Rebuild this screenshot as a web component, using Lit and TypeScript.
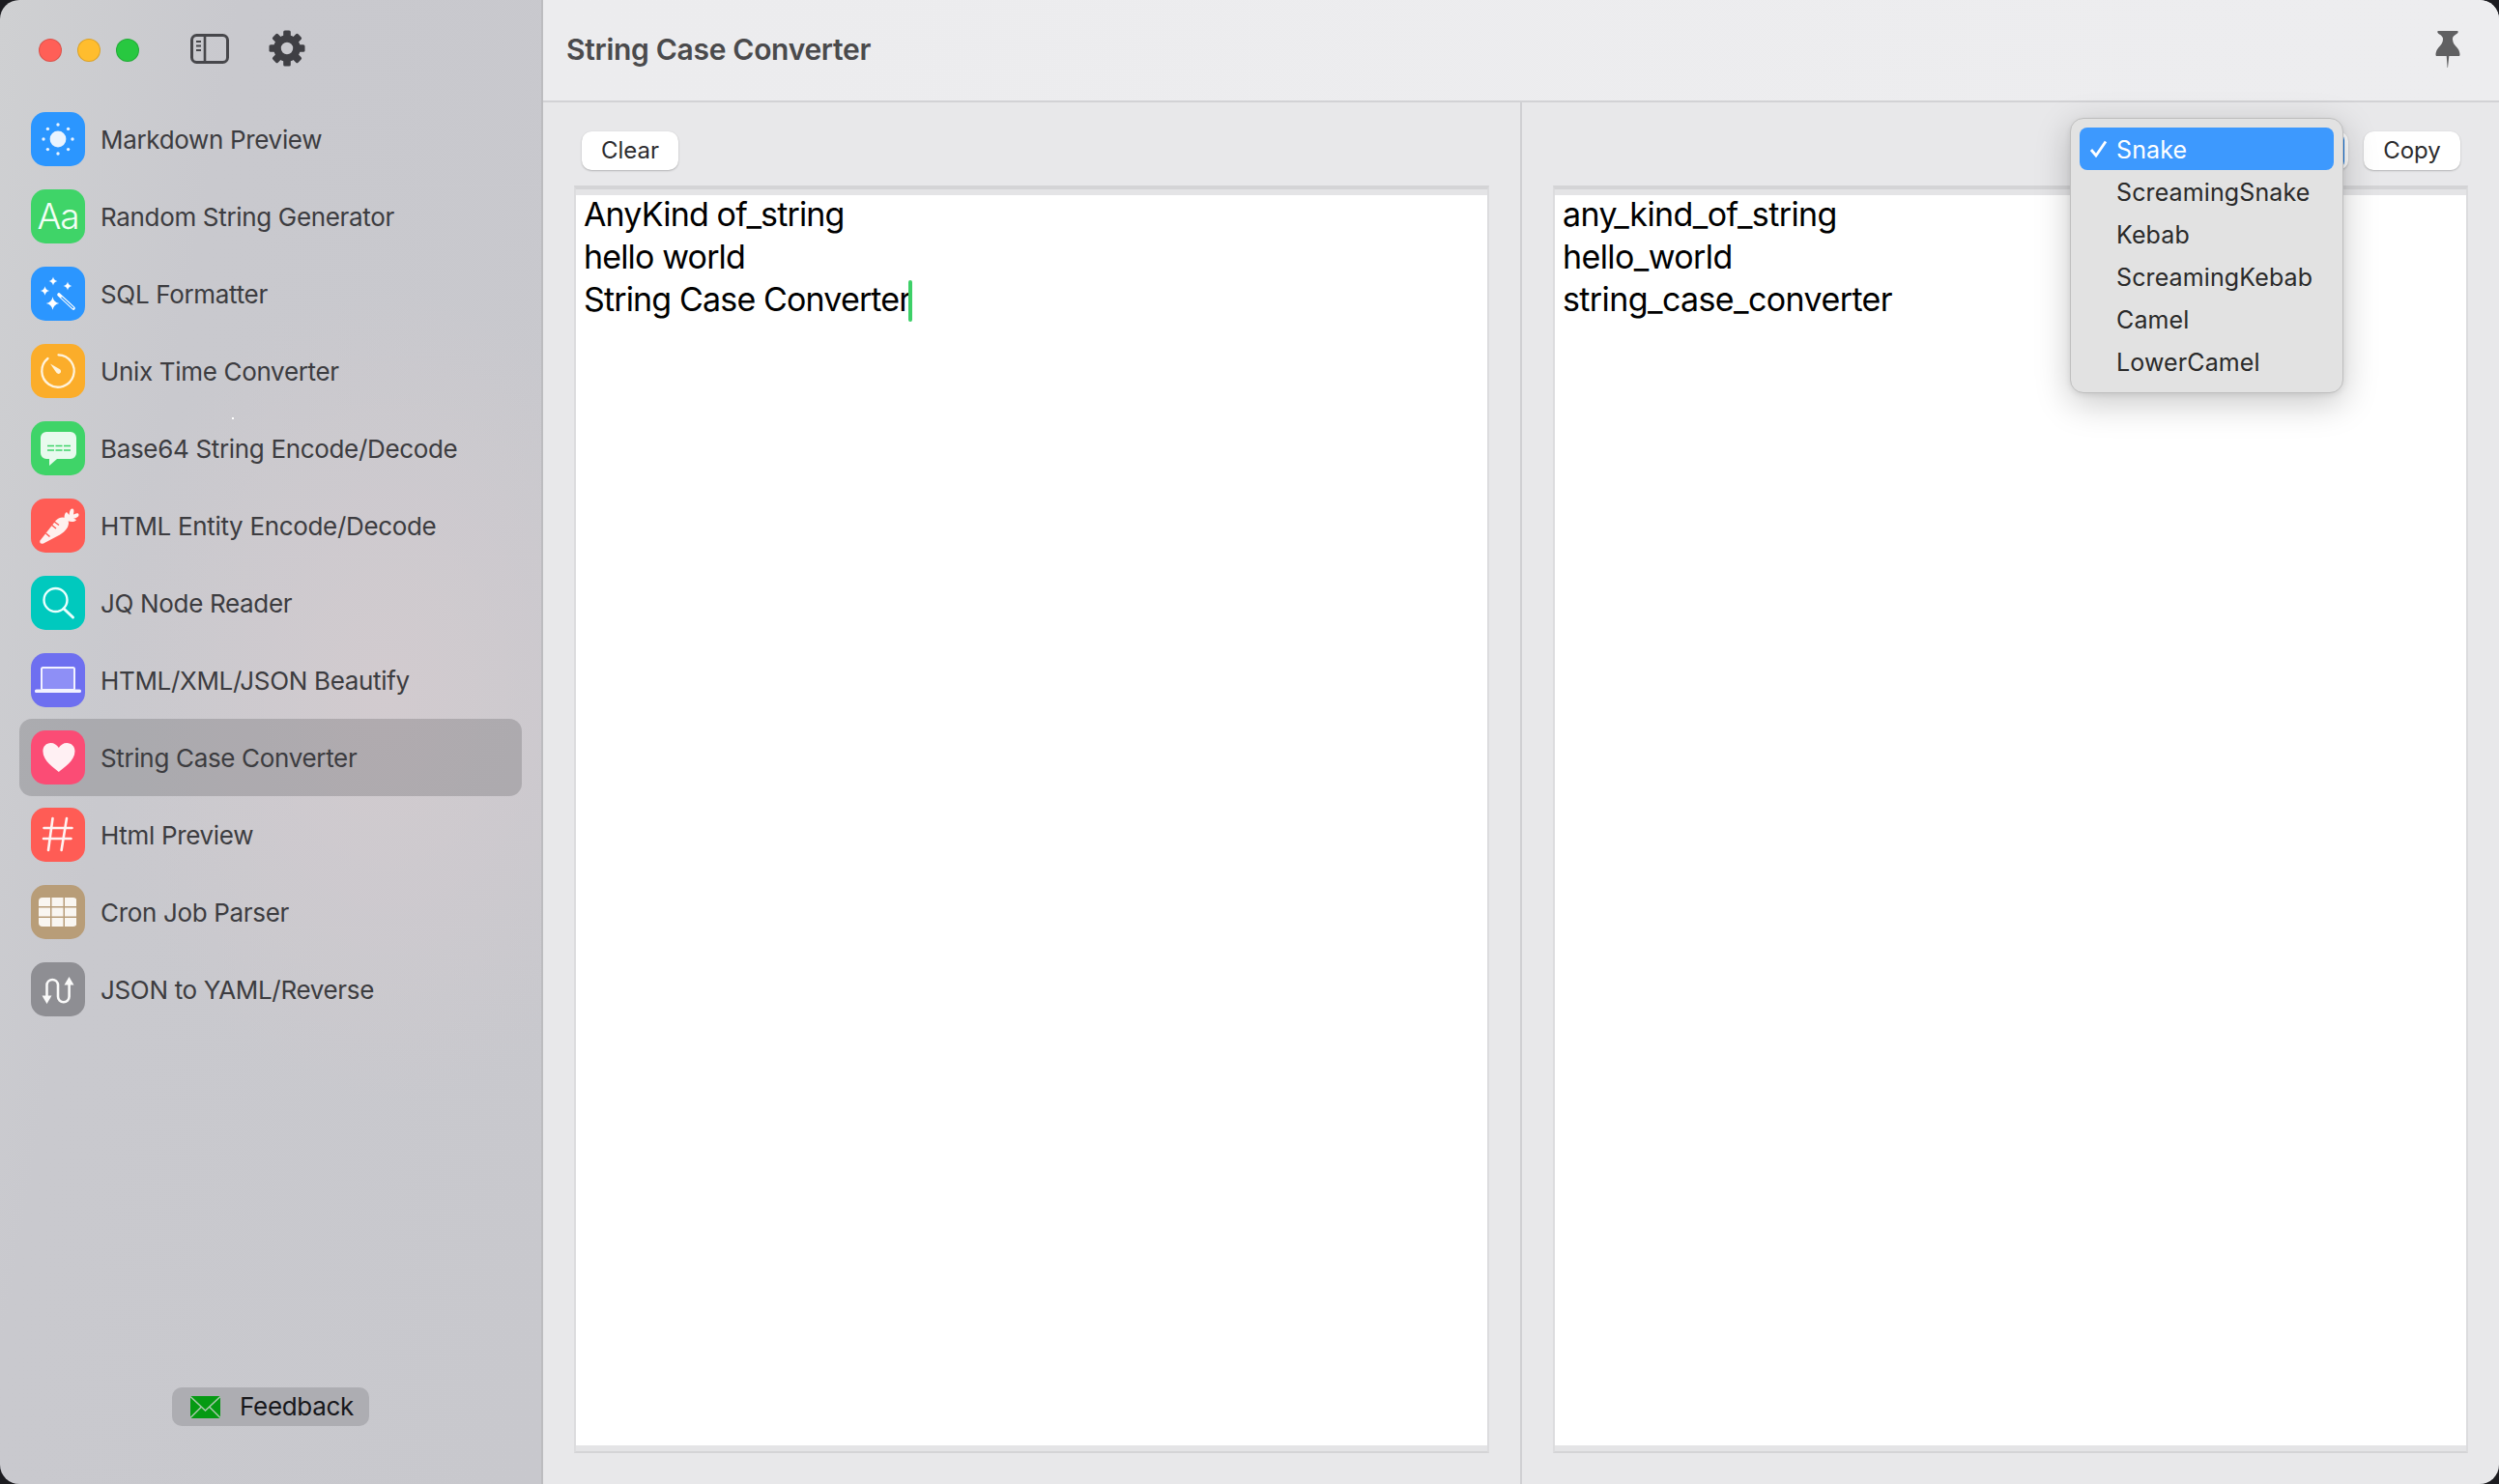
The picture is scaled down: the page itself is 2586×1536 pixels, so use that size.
import { LitElement, html, css, svg } from "lit";
import { customElement } from "lit/decorators.js";

const star = (x: number, y: number, r: number) =>
  svg`<path d="M${x} ${y - r}Q${x + r * 0.15} ${y - r * 0.15} ${x + r} ${y}Q${x + r * 0.15} ${y + r * 0.15} ${x} ${y + r}Q${x - r * 0.15} ${y + r * 0.15} ${x - r} ${y}Q${x - r * 0.15} ${y - r * 0.15} ${x} ${y - r}Z" fill="#fff"/>`;

const sunDots = [0, 45, 90, 135, 180, 225, 270, 315].map((a) => {
  const r = (a * Math.PI) / 180;
  return svg`<circle cx=${28 + 15 * Math.cos(r)} cy=${28 + 15 * Math.sin(r)} r="1.7" fill="#eaf4ff"/>`;
});

const gridCells: unknown[] = [];
for (let r = 0; r < 3; r++) {
  for (let c = 0; c < 3; c++) {
    gridCells.push(svg`<rect x=${8 + c * 13.5} y=${13 + r * 10.5} width="12" height="9" fill="#f9f6f1"/>`);
  }
}

const icons = {
  sun: svg`<circle cx="28" cy="28" r="8.4" fill="#eaf4ff"/>${sunDots}`,
  wand: svg`${star(23, 15, 4.5)}${star(38, 20, 4.5)}${star(14.5, 25, 4.8)}${star(22.5, 38, 6.8)}
    <path d="M29 29L44 43" stroke="#fff" stroke-width="3.6" stroke-linecap="round"/>
    <path d="M32 32L43.5 42.5" stroke="#2b96ff" stroke-width="1.4" stroke-linecap="round"/>`,
  timer: svg`<path d="M28.5 11.3A16.7 16.7 0 1 1 17.5 15" fill="none" stroke="#fff3dc" stroke-width="2.3" stroke-linecap="round"/>
    <path d="M20 20.5L30 26.2A2.6 2.6 0 1 1 26.2 29.6Z" fill="#fff3dc"/>`,
  message: svg`<path d="M16 11H41A6 6 0 0 1 47 17V33A6 6 0 0 1 41 39H27L19 46V39H16A6 6 0 0 1 10 33V17A6 6 0 0 1 16 11Z" fill="#e8faee"/>
    <path d="M17 25.5H41M17 30H41" stroke="#3dd468" stroke-width="1.3" stroke-dasharray="7 1.5"/>`,
  carrot: svg`<path d="M9.5 43.5C8.5 46 10.5 47.5 13 46.5L30 37.5C36 34 40 28.5 38.8 23.5C36.5 18.5 30 18.5 26 22.5Z" fill="#fff0ee"/>
    <path d="M35 22C34 18 35 15 37 14L39.5 17C40 13 41 10 43 10.5C45 11 44.5 14 44 16.5C46 15.5 49 14 49.5 16.5C50 18.5 47 20.5 44 20.5L47 22C46 24.5 41 24.5 38 23Z" fill="#fff0ee"/>
    <path d="M21 27L26 31M23.5 23.5L29 27.5M15.5 36L19.5 39.5" stroke="#ff5c55" stroke-width="1.5"/>`,
  search: svg`<circle cx="25.5" cy="25" r="12" fill="none" stroke="#eafffd" stroke-width="2.4"/>
    <path d="M34 34L43.5 43" stroke="#eafffd" stroke-width="3" stroke-linecap="round"/>`,
  laptop: svg`<rect x="11" y="15" width="34" height="23" rx="1.5" fill="#8e8ff6" stroke="#f2f2ff" stroke-width="2"/>
    <rect x="4" y="37.5" width="48" height="3.6" rx="1.6" fill="#f2f2ff"/>`,
  heart: svg`<path d="M28.8 43C24 39 12.4 31.5 12.4 21.5C12.4 16.5 16 13 20.5 13C24 13 27 15 28.8 18C30.6 15 33.6 13 37.2 13C41.8 13 45.5 16.5 45.5 21.5C45.5 31.5 33.6 39 28.8 43Z" fill="#fff0f3"/>`,
  hash: svg`<path d="M13.5 21H42.5M13 32H41.5M22.5 11L18 44M37 11L31.6 44" stroke="#fff3f2" stroke-width="2.6" stroke-linecap="round"/>`,
  grid: svg`<clipPath id="gc"><rect x="8" y="13" width="39.5" height="30" rx="4"/></clipPath><g clip-path="url(#gc)">${gridCells}</g>`,
  flow: svg`<path d="M16.5 36V23A5.8 5.8 0 0 1 28 23V35.5A5.8 5.8 0 0 0 39.6 35.5V22" fill="none" stroke="#fafafa" stroke-width="2.6"/>
    <path d="M11.5 34.5H21.5L16.5 43ZM34.5 23.5H44.5L39.5 15Z" fill="#fafafa"/>`,
};

type Row = { label: string; color: string; icon?: keyof typeof icons; aa?: boolean; active?: boolean };

const rows: Row[] = [
  { label: "Markdown Preview", color: "#2b96ff", icon: "sun" },
  { label: "Random String Generator", color: "#3fd468", aa: true },
  { label: "SQL Formatter", color: "#2b96ff", icon: "wand" },
  { label: "Unix Time Converter", color: "#fbad2a", icon: "timer" },
  { label: "Base64 String Encode/Decode", color: "#3fd468", icon: "message" },
  { label: "HTML Entity Encode/Decode", color: "#ff5c55", icon: "carrot" },
  { label: "JQ Node Reader", color: "#00c9be", icon: "search" },
  { label: "HTML/XML/JSON Beautify", color: "#6e6ff0", icon: "laptop" },
  { label: "String Case Converter", color: "#fb4c75", icon: "heart", active: true },
  { label: "Html Preview", color: "#ff5c55", icon: "hash" },
  { label: "Cron Job Parser", color: "#b89d78", icon: "grid" },
  { label: "JSON to YAML/Reverse", color: "#8e8e93", icon: "flow" },
];

const gearTeeth = [0, 45, 90, 135, 180, 225, 270, 315].map(
  (a) => svg`<rect x="15.2" y="0.5" width="7.6" height="8" rx="1.6" fill="#3f3f44" transform="rotate(${a} 19 19)"/>`
);

@customElement("app-root")
export class AppRoot extends LitElement {
  static styles = css`
    :host {
      display: block;
      width: 2586px;
      height: 1536px;
      background: #1c1c20;
      font-family: Inter, "Liberation Sans", sans-serif;
      overflow: hidden;
    }
    .window {
      display: flex;
      height: 1536px;
      border-radius: 20px;
      overflow: hidden;
      position: relative;
    }
    .sidebar {
      width: 562px;
      box-sizing: border-box;
      flex: none;
      display: flex;
      flex-direction: column;
      border-right: 2px solid #bcbcbf;
      position: relative;
      background:
        radial-gradient(ellipse 300px 420px at 400px 720px, #d2cbcf 0%, rgba(210, 203, 207, 0) 100%),
        linear-gradient(100deg, #cfd0d2 0%, #c9c9ce 30%, #c8c8cd 100%);
    }
    .speck {
      position: absolute;
      left: 240px;
      top: 432px;
      width: 2px;
      height: 2px;
      background: #fff;
    }
    .bar {
      height: 104px;
      flex: none;
      display: flex;
      align-items: flex-start;
      padding: 35px 0 0 40px;
      box-sizing: border-box;
    }
    .lights {
      display: flex;
      gap: 16px;
      padding-top: 5px;
    }
    .light {
      width: 24px;
      height: 24px;
      border-radius: 50%;
      box-sizing: border-box;
      border: 1px solid rgba(0, 0, 0, 0.14);
    }
    .bar-icon {
      display: block;
      margin-left: 53px;
    }
    .gear {
      margin: -4px 0 0 41px;
      display: block;
    }
    nav {
      display: flex;
      flex-direction: column;
      padding: 0 20px;
    }
    .row {
      height: 80px;
      display: flex;
      align-items: center;
      gap: 16px;
      padding-left: 12px;
      border-radius: 13px;
      color: #3c3c40;
      font-size: 26px;
      letter-spacing: -0.33px;
      white-space: nowrap;
    }
    .row.active {
      background: rgba(90, 88, 92, 0.28);
    }
    .tile {
      width: 56px;
      height: 56px;
      flex: none;
      border-radius: 15px;
      display: flex;
      align-items: center;
      justify-content: center;
      overflow: hidden;
    }
    .tile svg {
      display: block;
    }
    .aa {
      color: #f2fff5;
      font-weight: 300;
      font-size: 37px;
      letter-spacing: -1px;
      line-height: 56px;
    }
    .feedback {
      margin: auto 0 60px;
      align-self: center;
      height: 40px;
      width: 204px;
      box-sizing: border-box;
      border-radius: 10px;
      background: #adadb2;
      display: flex;
      align-items: center;
      gap: 20px;
      padding: 0 0 2px 19px;
      font-size: 26px;
      color: #17171b;
      letter-spacing: -0.3px;
    }
    .feedback svg {
      display: block;
      margin-top: 2px;
    }
    main {
      flex: 1;
      min-width: 0;
      display: flex;
      flex-direction: column;
      background: #e8e8ea;
    }
    header {
      height: 104px;
      flex: none;
      background: linear-gradient(90deg, #ececee, #ededef);
      border-bottom: 2px solid #d2d2d5;
      display: flex;
      align-items: center;
      justify-content: space-between;
      padding: 0 40px 0 24px;
    }
    h1 {
      margin: 0 0 2px;
      font-size: 30px;
      font-weight: 600;
      color: #4a4a4c;
      letter-spacing: -0.3px;
    }
    header svg {
      display: block;
      margin-top: -2px;
    }
    .panes {
      flex: 1;
      min-height: 0;
      display: flex;
    }
    .pane {
      flex: 1;
      min-width: 0;
      display: flex;
      flex-direction: column;
      padding: 30px 32px 32px;
      position: relative;
    }
    .pane.left {
      width: 947px;
      flex: none;
      border-right: 2px solid #d0d0d3;
    }
    .tools {
      height: 40px;
      flex: none;
      display: flex;
      gap: 16px;
      margin-bottom: 16px;
      padding: 0 8px;
    }
    .pane.right .tools {
      justify-content: flex-end;
    }
    .btn {
      width: 100px;
      height: 40px;
      box-sizing: border-box;
      padding-bottom: 2px;
      border-radius: 10px;
      background: #fff;
      box-shadow: 0 1px 2px rgba(0, 0, 0, 0.22), 0 0 1px rgba(0, 0, 0, 0.12);
      display: flex;
      align-items: center;
      justify-content: center;
      font-size: 24px;
      color: #2c2c2e;
    }
    .select {
      width: 230px;
      height: 40px;
      border-radius: 10px;
      background: #fff;
      box-shadow: 0 1px 2px rgba(0, 0, 0, 0.22);
      display: flex;
      justify-content: flex-end;
      padding: 2px 4px 2px 0;
      box-sizing: border-box;
    }
    .select i {
      display: block;
      width: 32px;
      border-radius: 7px;
      background: #0a6fdc;
    }
    .editor {
      flex: 1;
      min-height: 0;
      display: flex;
      box-sizing: border-box;
      padding: 6px 0 6px;
      background: #e4e4e6;
      border-top: 4px solid #d4d4d6;
      border-bottom: 2px solid #d4d4d6;
      border-left: 2px solid #dcdcde;
      border-right: 2px solid #dcdcde;
    }
    .text {
      flex: 1;
      background: #fff;
      color: #000;
      padding-left: 8px;
      font-size: 34px;
      letter-spacing: -0.6px;
    }
    .left .text {
      letter-spacing: -0.85px;
    }
    .lines {
      margin-top: -2px;
      line-height: 44px;
      white-space: pre;
    }
    .caret {
      display: inline-block;
      width: 4px;
      height: 43px;
      margin: 2px 0 0 -2px;
      border-radius: 2px;
      background: #3dd068;
      vertical-align: top;
    }
    .menu {
      position: absolute;
      left: 567px;
      top: 16px;
      width: 283px;
      height: 285px;
      box-sizing: border-box;
      padding: 9px;
      border-radius: 14px;
      background: #e2e2e2;
      border: 1px solid #bebebe;
      box-shadow: 0 10px 36px rgba(0, 0, 0, 0.22), 0 2px 6px rgba(0, 0, 0, 0.08);
      display: flex;
      flex-direction: column;
      font-size: 25px;
      color: #2a2a2a;
    }
    .item {
      height: 44px;
      flex: none;
      box-sizing: border-box;
      display: flex;
      align-items: center;
      padding: 1px 0 0 38px;
      border-radius: 8px;
      letter-spacing: 0.12px;
      position: relative;
    }
    .item.on {
      background: #3d99fe;
      color: #fff;
    }
    .item svg {
      position: absolute;
      left: 10px;
      top: 13px;
    }
  `;

  render() {
    return html`<div class="window">
      <aside class="sidebar">
        <span class="speck"></span>
        <div class="bar">
          <div class="lights">
            <span class="light" style="background:#ff5f57"></span>
            <span class="light" style="background:#ffbd2e"></span>
            <span class="light" style="background:#28c840"></span>
          </div>
          <svg class="bar-icon" width="40" height="32" viewBox="0 0 40 32" fill="none">
            <rect x="1.5" y="1.5" width="37" height="28" rx="5" stroke="#47474b" stroke-width="3"/>
            <path d="M15 2V30" stroke="#47474b" stroke-width="2.6"/>
            <path d="M6 8H11M6 12.5H11M6 17H11" stroke="#47474b" stroke-width="2"/>
          </svg>
          <svg class="gear" width="38" height="38" viewBox="0 0 38 38" fill="none">
            ${gearTeeth}
            <circle cx="19" cy="19" r="10" stroke="#3f3f44" stroke-width="7.6"/>
          </svg>
        </div>
        <nav>
          ${rows.map(
            (r) => html`<div class="row ${r.active ? "active" : ""}">
              <span class="tile" style="background:${r.color}">
                ${r.aa
                  ? html`<span class="aa">Aa</span>`
                  : html`<svg width="56" height="56" viewBox="0 0 56 56">${icons[r.icon!]}</svg>`}
              </span>
              ${r.label}
            </div>`
          )}
        </nav>
        <div class="feedback">
          <svg width="31" height="23" viewBox="0 0 31 23">
            <rect width="31" height="23" fill="#059a13"/>
            <path d="M0 0.5L15.5 15L31 0.5M0 22.5L11.5 11M31 22.5L19.5 11" fill="none" stroke="#a9c9ab" stroke-width="1.5"/>
          </svg>
          Feedback
        </div>
      </aside>
      <main>
        <header>
          <h1>String Case Converter</h1>
          <svg width="26" height="40" viewBox="0 0 26 40" fill="#606062">
            <path d="M3.5 1H22.5C24 1 24 2.5 23 3.5C20.5 5.5 17.5 6.5 18 10C18.5 15 21 16 23.5 19.5C25 21.5 25.5 24 25.5 25.5C25.5 26.5 25 27 24 27H14.3L13 39H12.6L11.7 27H2C1 27 0.5 26.5 0.5 25.5C0.5 24 1 21.5 2.5 19.5C5 16 7.5 15 8 10C8.5 6.5 5.5 5.5 3 3.5C2 2.5 2 1 3.5 1Z"/>
          </svg>
        </header>
        <div class="panes">
          <section class="pane left">
            <div class="tools"><span class="btn">Clear</span></div>
            <div class="editor">
              <div class="text"><div class="lines">AnyKind of_string
hello world
String Case Converter<span class="caret"></span></div></div>
            </div>
          </section>
          <section class="pane right">
            <div class="tools">
              <span class="select"><i></i></span>
              <span class="btn">Copy</span>
            </div>
            <div class="editor">
              <div class="text"><div class="lines">any_kind_of_string
hello_world
string_case_converter</div></div>
            </div>
            <div class="menu">
              <div class="item on">
                <svg width="20" height="18" viewBox="0 0 20 18" fill="none">
                  <path d="M2 10L7 16L17 1.5" stroke="#fff" stroke-width="2.8"/>
                </svg>
                Snake
              </div>
              <div class="item">ScreamingSnake</div>
              <div class="item">Kebab</div>
              <div class="item">ScreamingKebab</div>
              <div class="item">Camel</div>
              <div class="item">LowerCamel</div>
            </div>
          </section>
        </div>
      </main>
    </div>`;
  }
}
